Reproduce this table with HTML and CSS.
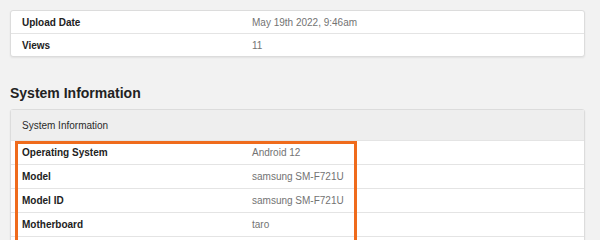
FILE: index.html
```html
<!DOCTYPE html>
<html>
<head>
<meta charset="utf-8">
<link rel="stylesheet" href="styles.css">
</head>
<body>
<div class="page">
  <div class="card">
    <div class="row"><div class="label">Upload Date</div><div class="value">May 19th 2022, 9:46am</div></div>
    <div class="row"><div class="label">Views</div><div class="value">11</div></div>
  </div>

  <h2 class="heading">System Information</h2>

  <div class="card card-sys">
    <div class="card-head">System Information</div>
    <div class="row tall"><div class="label">Operating System</div><div class="value">Android 12</div></div>
    <div class="row tall"><div class="label">Model</div><div class="value">samsung SM-F721U</div></div>
    <div class="row tall"><div class="label">Model ID</div><div class="value">samsung SM-F721U</div></div>
    <div class="row tall"><div class="label">Motherboard</div><div class="value">taro</div></div>
    <div class="row tall"><div class="label">&nbsp;</div><div class="value">&nbsp;</div></div>
    <div class="highlight"></div>
  </div>
</div>
</body>
</html>
```

FILE: styles.css
```css
html, body {
  margin: 0;
  padding: 0;
  background: #f2f2f2;
  font-family: "Liberation Sans", Arial, Helvetica, sans-serif;
  overflow: hidden;
}

.page {
  width: 575px;
  padding: 10px 0 0 10px;
}

.card {
  background: #ffffff;
  border: 1px solid #dcdcdc;
  border-radius: 3px;
  box-shadow: 0 1px 2px rgba(0, 0, 0, 0.07);
}

.card-sys {
  position: relative;
}

.row {
  display: flex;
  align-items: center;
  height: 22px;
  border-bottom: 1px solid #e4e4e4;
  font-size: 10px;
}

.row.tall {
  height: 23px;
}

.row:last-of-type {
  border-bottom: none;
}

.label {
  width: 230px;
  padding-left: 11px;
  font-weight: bold;
  color: #222222;
}

.value {
  color: #737373;
}

.heading {
  margin: 28px 0 7px 0;
  font-size: 14px;
  line-height: 17px;
  font-weight: bold;
  color: #222222;
}

.card-head {
  height: 30px;
  display: flex;
  align-items: center;
  padding-left: 11px;
  background: #eeeeee;
  border-bottom: 1px solid #e4e4e4;
  font-size: 10px;
  color: #2a2a2a;
}

.highlight {
  position: absolute;
  left: 4px;
  top: 31px;
  width: 336px;
  height: 140px;
  border: 3px solid #ef6b1c;
}
```
